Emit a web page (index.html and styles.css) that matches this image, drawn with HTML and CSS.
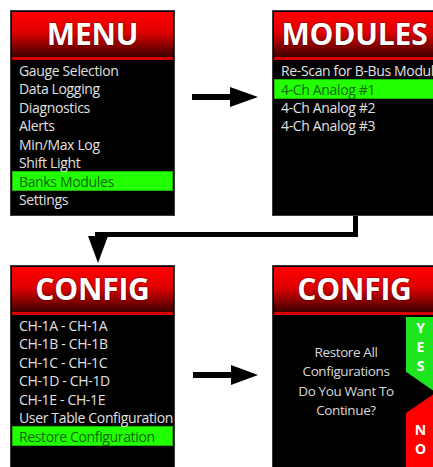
FILE: index.html
```html
<!DOCTYPE html>
<html lang="en">
<head>
  <meta charset="UTF-8">
  <title>Banks Menu Flow</title>
  <link rel="stylesheet" href="styles.css">
</head>
<body>
  <div class="flow">

    <!-- Main menu -->
    <div class="screen">
      <div class="screen-head">MENU</div>
      <ul class="screen-list">
        <li>Gauge Selection</li>
        <li>Data Logging</li>
        <li>Diagnostics</li>
        <li>Alerts</li>
        <li>Min/Max Log</li>
        <li>Shift Light</li>
        <li class="sel">Banks Modules</li>
        <li>Settings</li>
      </ul>
    </div>

    <div class="arrow-cell">
      <svg class="arrow" width="97" height="206" viewBox="0 0 97 206">
        <rect x="17" y="84" width="40" height="6" fill="#000"/>
        <polygon points="55,77 83,87 55,97" fill="#000"/>
      </svg>
    </div>

    <!-- Modules -->
    <div class="screen">
      <div class="screen-head">MODULES</div>
      <ul class="screen-list">
        <li class="nowrap">Re-Scan for B-Bus Modules</li>
        <li class="sel">4-Ch Analog #1</li>
        <li>4-Ch Analog #2</li>
        <li>4-Ch Analog #3</li>
      </ul>
    </div>

    <!-- Connector from modules down to config -->
    <div class="connector">
      <svg width="427" height="49" viewBox="0 0 427 49">
        <rect x="343" y="0" width="5" height="21" fill="#000"/>
        <rect x="85" y="16" width="263" height="5" fill="#000"/>
        <rect x="85" y="16" width="5" height="8" fill="#000"/>
        <polygon points="78,20 98,20 88,47" fill="#000"/>
      </svg>
    </div>

    <!-- Config list -->
    <div class="screen">
      <div class="screen-head">CONFIG</div>
      <ul class="screen-list">
        <li>CH-1A - CH-1A</li>
        <li>CH-1B - CH-1B</li>
        <li>CH-1C - CH-1C</li>
        <li>CH-1D - CH-1D</li>
        <li>CH-1E - CH-1E</li>
        <li>User Table Configuration</li>
        <li class="sel">Restore Configuration</li>
      </ul>
    </div>

    <div class="arrow-cell">
      <svg class="arrow" width="97" height="206" viewBox="0 0 97 206">
        <rect x="18" y="107" width="40" height="6" fill="#000"/>
        <polygon points="56,100 83,110 56,120" fill="#000"/>
      </svg>
    </div>

    <!-- Confirm -->
    <div class="screen">
      <div class="screen-head">CONFIG</div>
      <div class="confirm">
        <p class="confirm-msg">Restore All<br>Configurations<br>Do You Want To<br>Continue?</p>
        <div class="confirm-side">
          <div class="btn-yes"><span>Y</span><span>E</span><span>S</span></div>
          <div class="btn-no"><span>N</span><span>O</span></div>
        </div>
      </div>
    </div>

  </div>
</body>
</html>
```

FILE: styles.css
```css
/* Reset and base */
* { margin: 0; padding: 0; box-sizing: border-box; }
html, body { width: 433px; height: 467px; overflow: hidden; background: #fff; font-family: "Open Sans", "DejaVu Sans", sans-serif; }

/* Flow grid: screen, arrow, screen */
.flow {
  display: grid;
  grid-template-columns: 165px 97px 165px;
  grid-template-rows: 206px 49px 206px;
  margin: 10px 0 0 10px;
}
.arrow-cell svg { display: block; }
.connector { grid-column: 1 / 4; }
.connector svg { display: block; }

/* Device screen */
.screen {
  background: #000;
  border: 1px solid #3a3a3a;
  padding: 1px;
  display: flex;
  flex-direction: column;
  overflow: hidden;
}
.screen-head {
  height: 48px;
  background: linear-gradient(#ff0000 0%, #e00000 45%, #7a0000 80%, #3a0000 100%);
  border-bottom: 3px solid #d80000;
  color: #fff;
  font-weight: 700;
  font-size: 30px;
  letter-spacing: -0.2px;
  text-align: center;
  line-height: 44px;
  text-shadow: 0 0 2px rgba(0,0,0,0.7);
  white-space: nowrap;
}

.screen-list { list-style: none; padding-top: 2px; }
.screen-list li {
  height: 18.4px;
  line-height: 18.4px;
  padding-left: 7px;
  font-size: 14px;
  letter-spacing: -0.35px;
  color: #e0e0e0;
  white-space: nowrap;
}
.screen-list li.sel {
  background: #22ff00;
  color: #0e6a0e;
  height: 20px;
  line-height: 20px;
  margin: -1px 0 -0.6px;
  border: 1px solid #18b800;
  padding-left: 6px;
}

/* Confirm dialog */
.confirm { flex: 1; display: flex; padding-top: 2px; }
.confirm-msg {
  flex: 1;
  padding: 26px 0 0 12px;
  text-align: center;
  color: #d8d8d8;
  font-size: 13.5px;
  letter-spacing: -0.4px;
  line-height: 19.4px;
  white-space: nowrap;
}
.confirm-side { width: 29px; display: flex; flex-direction: column; gap: 1px; }
.btn-yes, .btn-no {
  display: flex;
  flex-direction: column;
  align-items: center;
  color: #fff;
  font-weight: 700;
  font-size: 14px;
  line-height: 19px;
}
.btn-yes {
  height: 75px;
  background: #1ee61e;
  padding-top: 1px;
  clip-path: polygon(0 0, 100% 0, 100% 100%, 0 73%);
}
.btn-no {
  flex: 1;
  background: #ff0000;
  padding-top: 27px;
  clip-path: polygon(100% 0, 100% 100%, 0 100%, 0 20px);
}
.btn-yes span, .btn-no span { width: 27px; text-align: center; }
```
